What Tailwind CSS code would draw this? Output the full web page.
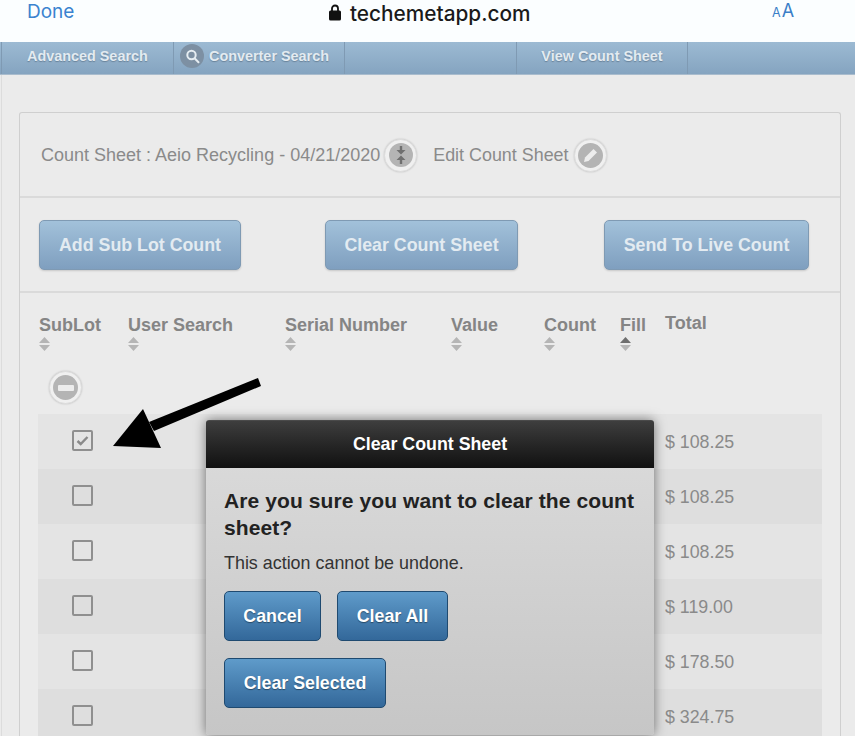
<!DOCTYPE html>
<html lang="en">
<head>
    <meta charset="UTF-8">
    <meta name="viewport" content="width=device-width, initial-scale=1.0">
    <title>Clear Count Sheet</title>
    <script src="https://cdn.jsdelivr.net/npm/@tailwindcss/browser@4"></script>
</head>
<body class="relative h-[736px] overflow-hidden bg-[#ebebeb] font-['Liberation_Sans',Arial,sans-serif]">

    <!-- browser bar -->
    <div class="relative flex h-[42px] items-start bg-[#fbfeff]">
        <span class="ml-[27px] mt-[2px] text-[19px] leading-[20px] text-[#3a83cf] font-['Inter',sans-serif]">Done</span>
        <div class="absolute left-[329px] top-[3px] flex items-center gap-[9px]">
            <svg class="h-[17px] w-[12px]" viewBox="0 0 12 17"><path d="M3 7V4.500a3 3 0 0 1 6 0V7" fill="none" stroke="#111" stroke-width="1.800"/><rect x="0" y="6.500" width="12" height="10" rx="1.500" fill="#111"/></svg>
            <span class="mt-[2px] text-[20.800px] font-medium leading-[17px] text-[#1a1a1a] font-['Inter',sans-serif]">techemetapp.com</span>
        </div>
        <div class="absolute left-[772px] top-[1px] flex items-baseline gap-[1px] text-[#3a7fc8] font-['Inter',sans-serif]">
            <span class="text-[12.500px] leading-[20px]">A</span><span class="text-[18px] leading-[20px]">A</span>
        </div>
    </div>

    <!-- nav -->
    <div class="flex h-[33px] border-b border-[#a9bccd] bg-gradient-to-b from-[#9cbad3] to-[#85a4c0] pl-[1px] text-[14.400px] font-bold text-[#e3ebf1] [text-shadow:0_1px_1px_rgba(70,90,110,.5)]">
        <div class="flex w-[173px] items-center border-r border-l border-[#7f9ab3] pl-[25px] pb-[3px]">Advanced Search</div>
        <div class="flex w-[171px] items-center border-r border-[#7f9ab3] pl-[6px] pb-[3px]">
            <span class="mr-[5px] -mt-[1px] flex h-[24px] w-[24px] items-center justify-center rounded-full bg-[#7d90a3]">
                <svg class="h-[15px] w-[15px]" viewBox="0 0 15 15" fill="none" stroke="#e6edf2" stroke-width="2"><circle cx="6.500" cy="6" r="4.200"/><path d="M9.800 9.500l3.700 3.700" stroke-linecap="round"/></svg>
            </span>
            Converter Search
        </div>
        <div class="w-[172px] border-r border-[#7f9ab3]"></div>
        <div class="flex w-[171px] items-center justify-center border-r border-[#7f9ab3] pb-[3px]">View Count Sheet</div>
    </div>

    <!-- page -->
    <div class="ml-[1px] h-[661px] overflow-hidden border-l border-[#dcdcdc] bg-[#ebebeb] pl-[17px] pr-[14px] pt-[37px]">
        <div class="h-[624px] overflow-hidden rounded-t-[3px] border border-[#cfcfcf] border-b-0 bg-[#ebebeb]">

            <div class="flex h-[85px] items-center border-b-2 border-[#dadada] pl-[21px] pt-[1px] text-[18px] text-[#8a8a8a]">
                <span>Count Sheet : Aeio Recycling - 04/21/2020</span>
                <span class="ml-[4px] flex h-[33px] w-[33px] items-center justify-center rounded-full border border-[#dedede] bg-[#f0f0f0] shadow-[0_0_2px_rgba(0,0,0,.2)]">
                    <span class="flex h-[24px] w-[24px] items-center justify-center rounded-full bg-[#b4b4b4]">
                        <svg class="h-[18px] w-[12px]" viewBox="0 0 12 18" fill="#6f6f6f"><path d="M6 8.500L1.500 4H4.800V0H7.200V4H10.500Z"/><path d="M6 9.500L1.500 14H4.800V18H7.200V14H10.500Z"/></svg>
                    </span>
                </span>
                <span class="ml-[16px] text-[17.900px]">Edit Count Sheet</span>
                <span class="ml-[5px] flex h-[33px] w-[33px] items-center justify-center rounded-full border border-[#dedede] bg-[#f0f0f0] shadow-[0_0_2px_rgba(0,0,0,.2)]">
                    <span class="flex h-[25px] w-[25px] items-center justify-center rounded-full bg-[#b4b4b4]">
                        <svg class="h-[15px] w-[15px]" viewBox="0 0 15 15" fill="#ededed"><path d="M1 14l1-4.500L10.500 1l3.500 3.500L5.500 13Z"/></svg>
                    </span>
                </span>
            </div>

            <div class="flex h-[95px] items-start border-b-2 border-[#dadada] pl-[19px] pt-[22px] text-[17.800px] font-bold text-[#e3ebf1] [text-shadow:0_1px_1px_rgba(70,90,110,.5)]">
                <button class="h-[50px] w-[202px] rounded-[5px] border border-[#7f9ab3] bg-gradient-to-b from-[#a2c1da] to-[#7f9fbf] shadow-[0_1px_2px_rgba(0,0,0,.15)]">Add Sub Lot Count</button>
                <button class="ml-[84px] h-[50px] w-[193px] rounded-[5px] border border-[#7f9ab3] bg-gradient-to-b from-[#a2c1da] to-[#7f9fbf] shadow-[0_1px_2px_rgba(0,0,0,.15)]">Clear Count Sheet</button>
                <button class="ml-[86px] h-[50px] w-[205px] rounded-[5px] border border-[#7f9ab3] bg-gradient-to-b from-[#a2c1da] to-[#7f9fbf] shadow-[0_1px_2px_rgba(0,0,0,.15)]">Send To Live Count</button>
            </div>

            <!-- table head -->
            <div class="grid h-[121px] grid-cols-[89px_157px_166px_93px_76px_45px_1fr] pl-[19px] pt-[21px] text-[18px] font-bold leading-[22px] text-[#858585]">
                <div>SubLot<svg class="mt-[1px] h-[14px] w-[11px]" viewBox="0 0 11 14" fill="#b5b5b5"><path d="M5.500 0L11 6H0Z"/><path d="M5.500 14L11 8H0Z"/></svg></div>
                <div>User Search<svg class="mt-[1px] h-[14px] w-[11px]" viewBox="0 0 11 14" fill="#b5b5b5"><path d="M5.500 0L11 6H0Z"/><path d="M5.500 14L11 8H0Z"/></svg></div>
                <div>Serial Number<svg class="mt-[1px] h-[14px] w-[11px]" viewBox="0 0 11 14" fill="#b5b5b5"><path d="M5.500 0L11 6H0Z"/><path d="M5.500 14L11 8H0Z"/></svg></div>
                <div>Value<svg class="mt-[1px] h-[14px] w-[11px]" viewBox="0 0 11 14" fill="#b5b5b5"><path d="M5.500 0L11 6H0Z"/><path d="M5.500 14L11 8H0Z"/></svg></div>
                <div>Count<svg class="mt-[1px] h-[14px] w-[11px]" viewBox="0 0 11 14" fill="#b5b5b5"><path d="M5.500 0L11 6H0Z"/><path d="M5.500 14L11 8H0Z"/></svg></div>
                <div>Fill<svg class="mt-[1px] h-[14px] w-[11px]" viewBox="0 0 11 14"><path d="M5.500 0L11 6H0Z" fill="#6e6e6e"/><path d="M5.500 14L11 8H0Z" fill="#b5b5b5"/></svg></div>
                <div class="-mt-[2px]">Total</div>
            </div>

            <!-- rows -->
            <div class="relative ml-[18px] mr-[18px]">
                <span class="absolute left-[11px] -top-[43px] flex h-[33px] w-[33px] items-center justify-center rounded-full border border-[#dedede] bg-[#f0f0f0] shadow-[0_0_2px_rgba(0,0,0,.2)]">
                    <span class="flex h-[25px] w-[25px] items-center justify-center rounded-full bg-[#b4b4b4]"><span class="h-[6px] w-[16px] rounded-[1px] bg-[#ececec]"></span></span>
                </span>
                <div class="flex h-[55px] items-center justify-between bg-[#e4e4e4] pl-[34px] text-[17.800px] text-[#8a8a8a]">
                    <span class="mb-[2px] flex h-[21px] w-[21px] items-center justify-center rounded-[2px] border-2 border-[#8f8f8f]">
                        <svg class="h-[13px] w-[13px]" viewBox="0 0 13 13" fill="none" stroke="#8a8a8a" stroke-width="2.400"><path d="M1.500 7l3.200 3L11.500 3"/></svg>
                    </span>
                    <span class="mt-[1px] w-[157px]">$ 108.25</span>
                </div>
                <div class="flex h-[55px] items-center justify-between bg-[#dedede] pl-[34px] text-[17.800px] text-[#8a8a8a]">
                    <span class="mb-[2px] h-[21px] w-[21px] rounded-[2px] border-2 border-[#8f8f8f]"></span>
                    <span class="mt-[1px] w-[157px]">$ 108.25</span>
                </div>
                <div class="flex h-[55px] items-center justify-between bg-[#e4e4e4] pl-[34px] text-[17.800px] text-[#8a8a8a]">
                    <span class="mb-[2px] h-[21px] w-[21px] rounded-[2px] border-2 border-[#8f8f8f]"></span>
                    <span class="mt-[1px] w-[157px]">$ 108.25</span>
                </div>
                <div class="flex h-[55px] items-center justify-between bg-[#dedede] pl-[34px] text-[17.800px] text-[#8a8a8a]">
                    <span class="mb-[2px] h-[21px] w-[21px] rounded-[2px] border-2 border-[#8f8f8f]"></span>
                    <span class="mt-[1px] w-[157px]">$ 119.00</span>
                </div>
                <div class="flex h-[55px] items-center justify-between bg-[#e4e4e4] pl-[34px] text-[17.800px] text-[#8a8a8a]">
                    <span class="mb-[2px] h-[21px] w-[21px] rounded-[2px] border-2 border-[#8f8f8f]"></span>
                    <span class="mt-[1px] w-[157px]">$ 178.50</span>
                </div>
                <div class="flex h-[55px] items-center justify-between bg-[#dedede] pl-[34px] text-[17.800px] text-[#8a8a8a]">
                    <span class="mb-[2px] h-[21px] w-[21px] rounded-[2px] border-2 border-[#8f8f8f]"></span>
                    <span class="mt-[1px] w-[157px]">$ 324.75</span>
                </div>
            </div>
        </div>
    </div>

    <!-- dialog -->
    <div class="absolute left-[206px] top-[420px] h-[315px] w-[448px] overflow-hidden rounded-[3px] bg-gradient-to-b from-[#dcdcdc] to-[#c6c6c6] shadow-[0_0_12px_rgba(0,0,0,.5)]">
        <div class="flex h-[48px] items-center justify-center border-t border-[#4a4a4a] bg-gradient-to-b from-[#3e3e3e] to-[#111111] text-[17.800px] font-bold text-white">Clear Count Sheet</div>
        <div class="px-[18px] pt-[19px]">
            <p class="text-[21px] font-bold leading-[27px] tracking-[0.1px] text-[#222222]">Are you sure you want to clear the count sheet?</p>
            <p class="mt-[10px] text-[17.900px] leading-[24px] text-[#333333]">This action cannot be undone.</p>
            <div class="mt-[16px] flex gap-[16px]">
                <button class="h-[50px] w-[97px] rounded-[5px] border border-[#1f4a70] bg-gradient-to-b from-[#5f9bca] to-[#33689a] text-[17.800px] font-bold text-white [text-shadow:0_1px_1px_rgba(0,0,0,.4)]">Cancel</button>
                <button class="h-[50px] w-[111px] rounded-[5px] border border-[#1f4a70] bg-gradient-to-b from-[#5f9bca] to-[#33689a] text-[17.800px] font-bold text-white [text-shadow:0_1px_1px_rgba(0,0,0,.4)]">Clear All</button>
            </div>
            <button class="mt-[17px] h-[50px] w-[162px] rounded-[5px] border border-[#1f4a70] bg-gradient-to-b from-[#5f9bca] to-[#33689a] text-[17.800px] font-bold text-white [text-shadow:0_1px_1px_rgba(0,0,0,.4)]">Clear Selected</button>
        </div>
    </div>

    <!-- arrow annotation -->
    <svg class="pointer-events-none absolute left-0 top-0" width="855" height="736" viewBox="0 0 855 736">
        <path d="M258 378L261 386L154 431L149 422Z" fill="#000"/>
        <path d="M143 409L113 446L161 448Z" fill="#000"/>
    </svg>
</body>
</html>
